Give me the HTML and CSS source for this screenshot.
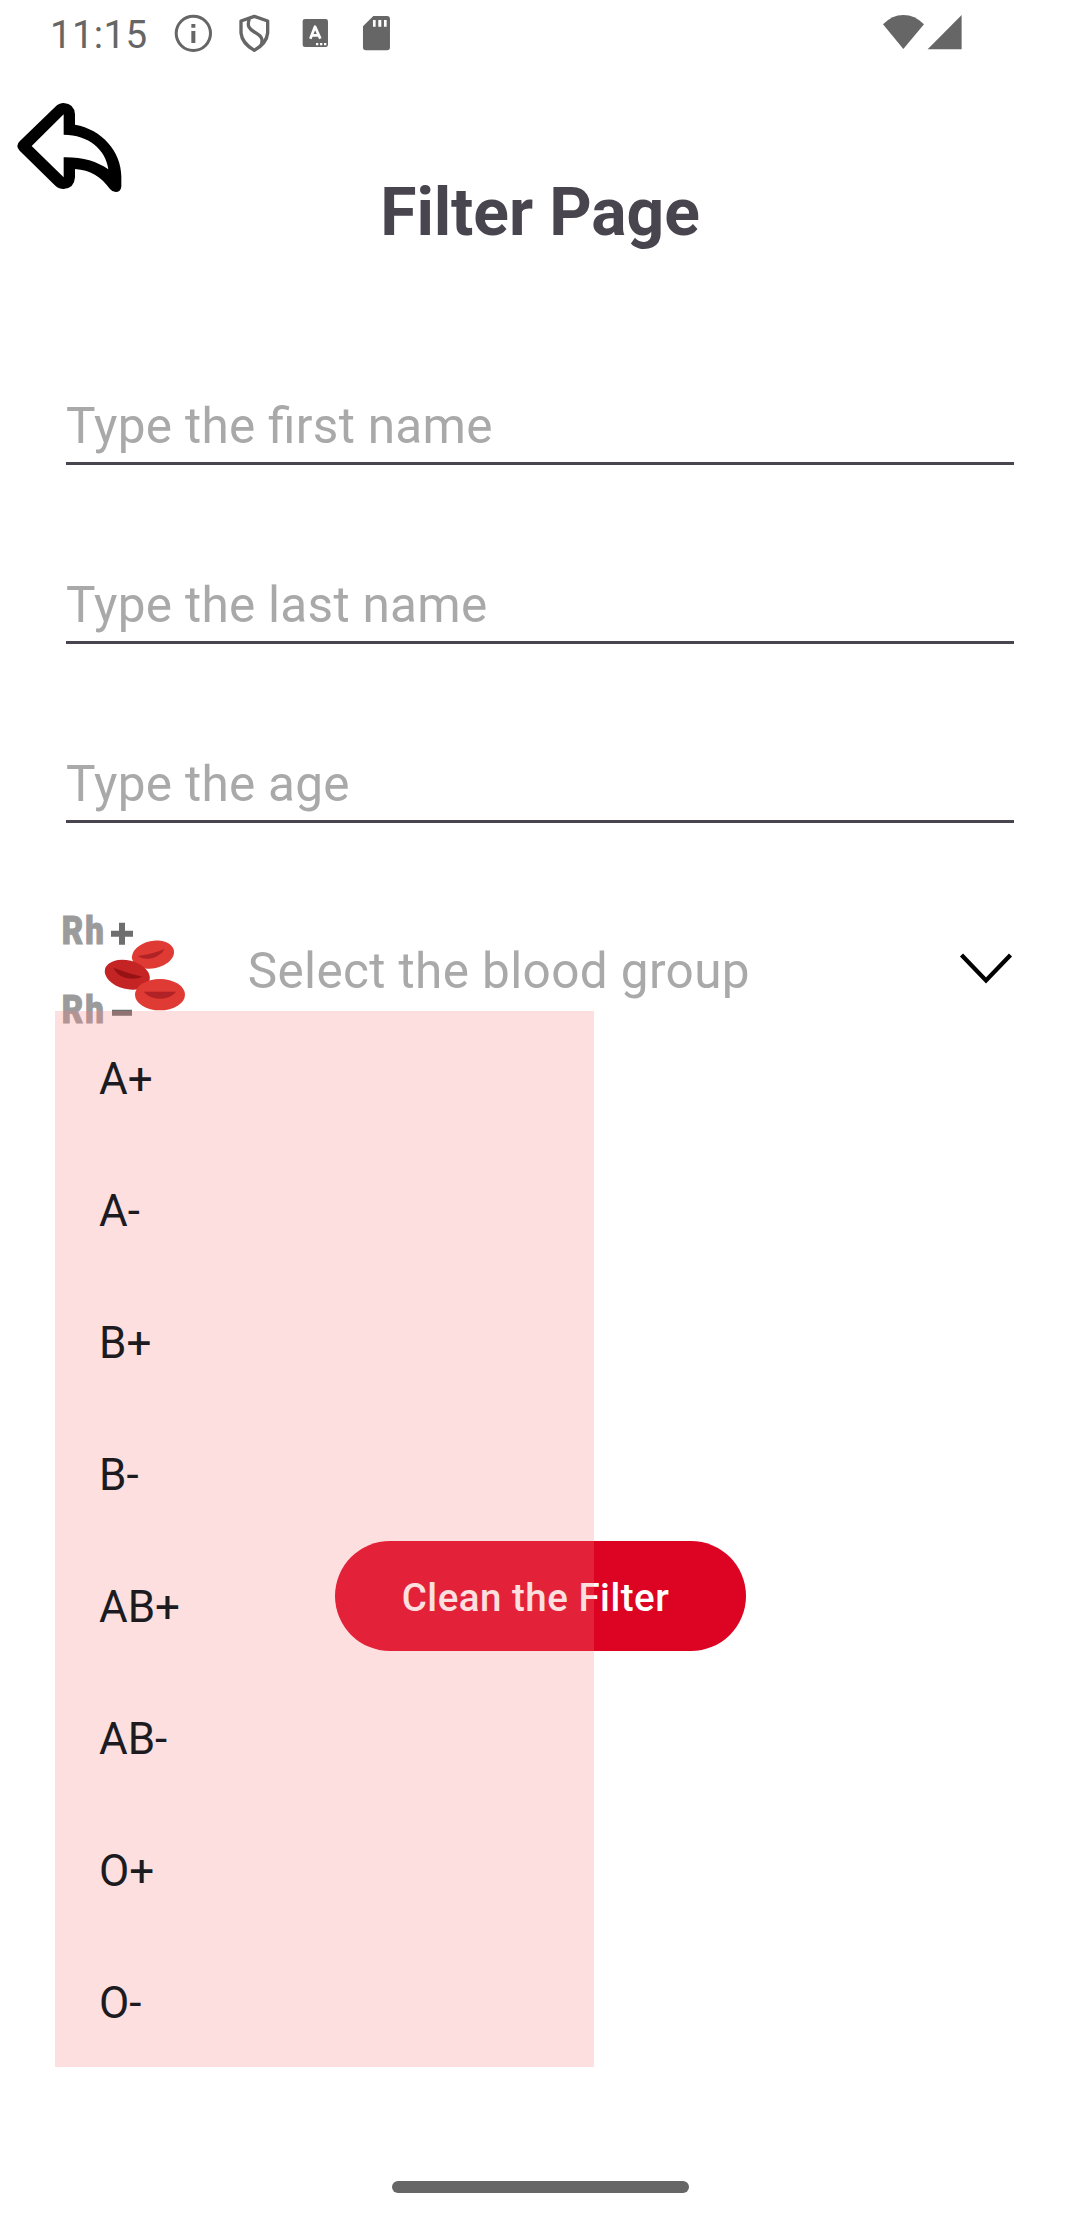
FILE: index.html
```html
<!DOCTYPE html>
<html lang="en">
<head>
<meta charset="utf-8">
<title>Filter Page</title>
<link rel="stylesheet" href="styles.css">
</head>
<body>
<div class="screen">
  <header class="status">
    <span class="clock">11:15</span>
    <svg class="status-icons" viewBox="510 30 680 140" fill="#666">
      <circle cx="580" cy="100" r="51.500" fill="none" stroke="#666" stroke-width="9"/>
      <path d="M574 72h12v11h-12zM574 93h12v36h-12z"/>
      <path d="M763 49L803 63V99Q800 130 763 151Q726 130 723 99V63Z" fill="none" stroke="#666" stroke-width="10" stroke-linejoin="round"/>
      <path d="M748 57C740 78 748 87 763 96C784 108 791 116 783 137" fill="none" stroke="#666" stroke-width="10"/>
      <rect x="908" y="57" width="76" height="84" rx="7"/>
      <path d="M931 116L945 80L961 116M936 106H956" fill="none" stroke="#fff" stroke-width="8" stroke-linejoin="round"/>
      <path d="M948 129h7v7h-7zM960 129h7v7h-7zM972 129h7v7h-7z" fill="#fff"/>
      <path d="M1120 48H1161Q1170 48 1170 57V142Q1170 151 1161 151H1098Q1089 151 1089 142V79Z"/>
      <path d="M1119 60h8v20h-8zM1135 60h9v20h-9zM1152 60h8v20h-8z" fill="#fff"/>
    </svg>
    <svg class="signal-icons" viewBox="69 40 237 110" fill="#666">
      <path d="M69 74Q96 46 130 46Q165 46 192 74L130 148Z"/>
      <path d="M203 149L305 46V149Z"/>
    </svg>
  </header>

  <div class="top">
    <svg class="back" viewBox="50 306 316 273">
      <path fill-rule="evenodd" d="M51 438Q51 430 58 424L165 320Q176 309 190 309Q222 311 224 343V374C305 388 363 455 363 530V560Q361 576 346 576Q336 576 329 567C302 530 270 510 224 507V532Q222 565 190 567Q176 567 165 557L58 452Q51 446 51 438ZM94 438L190 532V472C245 471 290 484 324 508C317 450 265 404 190 404V343Z"/>
    </svg>
    <h1 class="title">Filter Page</h1>
  </div>

  <main class="form">
    <div class="field">Type the first name</div>
    <div class="field">Type the last name</div>
    <div class="field">Type the age</div>
    <div class="select">
      <svg class="blood" viewBox="30 40 380 340">
        <g class="rh">
          <text transform="translate(35 134) scale(.84 1)" x="0 84">Rh</text>
          <text transform="translate(35 371) scale(.84 1)" x="0 84">Rh</text>
        </g>
        <path fill="#6e6e6e" d="M207 69h18v24h24v18h-24v24h-18v-24h-24v-18h24zM186 330h60v18h-60z"/>
        <ellipse cx="309" cy="165" rx="64" ry="41" transform="rotate(-12 309 165)" fill="#df3a33"/>
        <path d="M264 169Q310 163 345 147Q325 176 295 177Q275 178 264 169Z" fill="#b02225"/>
        <ellipse cx="232" cy="225" rx="69" ry="43" transform="rotate(14 232 225)" fill="#c52425"/>
        <path d="M190 204Q230 220 277 231Q260 240 232 236Q202 229 190 204Z" fill="#971214"/>
        <ellipse cx="330" cy="285" rx="75" ry="47" fill="#df3a33"/>
        <path d="M281 276H379Q360 297 330 297Q300 297 281 276Z" fill="#b02225"/>
      </svg>
      <span class="hint">Select the blood group</span>
      <svg class="chevron" viewBox="0 0 54 34"><path d="M2.500 3L27 28.500L51.500 3" fill="none" stroke="#000" stroke-width="4.300"/></svg>
    </div>
    <button class="clean">Clean the Filter</button>
  </main>

  <ul class="menu">
    <li>A+</li><li>A-</li><li>B+</li><li>B-</li><li>AB+</li><li>AB-</li><li>O+</li><li>O-</li>
  </ul>
  <div class="home"></div>
</div>
</body>
</html>
```
FILE: styles.css
```css
* { box-sizing: border-box; }
body { margin: 0; background: #fff; font-family: Roboto, "Liberation Sans", sans-serif; }
.screen { position: relative; width: 1080px; height: 2220px; overflow: hidden; display: flex; flex-direction: column; }
svg { display: block; flex: none; overflow: visible; }

.status { height: 66px; display: flex; align-items: flex-start; padding: 10px 118px 0 50px; }
.clock { width: 120px; line-height: 49px; font-size: 38.5px; color: #666; letter-spacing: 0.3px; }
.status-icons { width: 226.67px; height: 46.67px; }
.signal-icons { width: 79px; height: 36.67px; margin: 3.300px 0 0 auto; }

.top { height: 294px; padding: 36px 17px 0; }
.back { width: 105.33px; height: 91px; }
.title { margin: -20px 0 0; text-align: center; font-size: 66px; line-height: 80px; font-weight: 700; letter-spacing: -0.1px; color: #49454f; }

.form { display: flex; flex-direction: column; padding: 0 66px; }
.field { height: 105px; margin-bottom: 74px; border-bottom: 3px solid #49454f; padding-top: 35px; line-height: 62px; font-size: 49.5px; letter-spacing: 0.28px; color: #a9a9a9; font-feature-settings: "liga" 1; }
.select { height: 114px; margin: 16px 0 0 -6px; display: flex; }
.blood { width: 126.67px; height: 113.33px; }
.rh { font: 900 118px Roboto, sans-serif; fill: #9b9b9b; stroke: #9b9b9b; stroke-width: 3; }
.hint { margin-left: 61px; line-height: 116px; font-size: 49.5px; letter-spacing: 0.37px; color: #a9a9a9; white-space: nowrap; }
.chevron { width: 54px; height: 34px; margin: 39px 1px 0 auto; }
.clean { align-self: center; width: 411px; height: 110px; margin-top: 514px; border: 0; border-radius: 55px; background: #dc0323; color: #fff; font: 500 38.5px Roboto, sans-serif; letter-spacing: 0.5px; padding: 2px 9px 0 0; }

.menu { position: absolute; left: 55px; top: 1011px; width: 539px; margin: 0; padding: 0; list-style: none; background: rgba(247, 128, 128, 0.25); }
.menu li { height: 132px; padding-left: 44px; line-height: 136px; font-size: 44px; color: #1c1b1f; }
.home { width: 297px; height: 12px; margin: auto auto 27px; border-radius: 6px; background: #666; }
```
